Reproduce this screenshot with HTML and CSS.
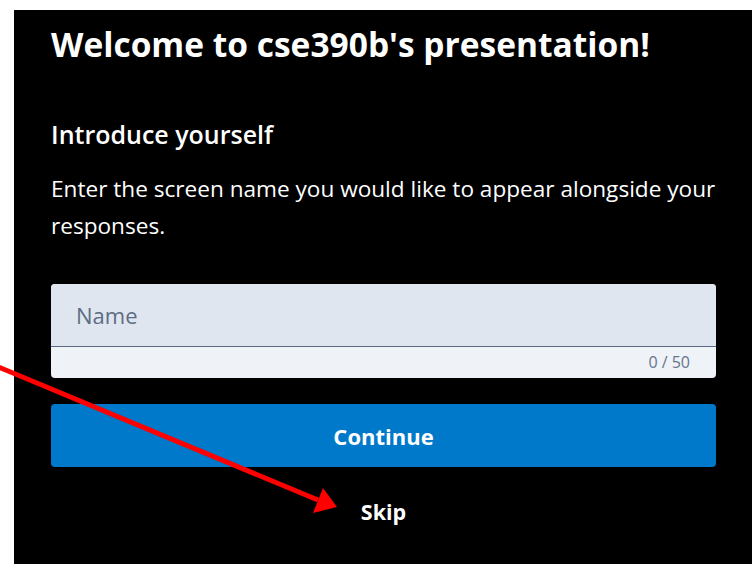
FILE: index.html
```html
<!DOCTYPE html>
<html lang="en">
<head>
<meta charset="utf-8">
<title>Welcome</title>
<link rel="stylesheet" href="styles.css">
</head>
<body>
<main class="panel">
  <h1 class="title">Welcome to cse390b's presentation!</h1>
  <h2 class="subtitle">Introduce yourself</h2>
  <p class="lead">Enter the screen name you would like to appear alongside your responses.</p>
  <div class="field">
    <input class="field-input" type="text" placeholder="Name" maxlength="50">
    <div class="field-count">0 / 50</div>
  </div>
  <button class="btn-primary" type="button">Continue</button>
  <button class="btn-link" type="button">Skip</button>
</main>
<svg class="pointer" width="360" height="530" viewBox="0 0 360 530" aria-hidden="true">
  <line x1="-4" y1="366" x2="318" y2="500" stroke="#ff0000" stroke-width="5"/>
  <polygon points="337,507 313,513 323,488" fill="#ff0000"/>
</svg>
</body>
</html>
```
FILE: styles.css
```css
html, body {
  margin: 0;
  padding: 0;
  background: #ffffff;
}

body {
  font-family: "Open Sans", "Noto Sans", sans-serif;
  color: #ffffff;
  overflow: hidden;
  height: 564px;
}

.panel {
  margin: 10px 0 0 14px;
  min-height: 554px;
  box-sizing: border-box;
  background: #000000;
  padding: 14px 36px 0 37px;
  display: flex;
  flex-direction: column;
}

.title {
  margin: 0;
  font-size: 33.5px;
  line-height: 40px;
  font-weight: 700;
}

.subtitle {
  margin: 54px 0 0;
  font-size: 25px;
  line-height: 32px;
  font-weight: 600;
}

.lead {
  margin: 20px 0 0;
  font-size: 22.6px;
  line-height: 37px;
  font-weight: 400;
}

.field {
  margin-top: 40px;
  border-radius: 4px;
  overflow: hidden;
  background: #eff3f8;
}

.field-input {
  display: block;
  width: 100%;
  box-sizing: border-box;
  height: 63px;
  border: 0;
  border-bottom: 1px solid #5b6b86;
  background: #e0e6ef;
  padding: 0 25px;
  font-family: inherit;
  font-size: 22px;
  color: #1f2a3c;
  outline: none;
}

.field-input::placeholder {
  color: #5d6c84;
}

.field-count {
  height: 31px;
  padding-right: 26px;
  text-align: right;
  font-size: 16px;
  line-height: 31px;
  color: #66748c;
}

.btn-primary {
  margin-top: 26px;
  height: 63px;
  border: 0;
  border-radius: 4px;
  background: #0079cb;
  color: #ffffff;
  font-family: inherit;
  font-size: 22px;
  font-weight: 700;
  cursor: pointer;
}

.btn-link {
  align-self: center;
  margin-top: 30px;
  border: 0;
  background: transparent;
  color: #ffffff;
  font-family: inherit;
  font-size: 21.5px;
  font-weight: 700;
  padding: 0;
  cursor: pointer;
}

.pointer {
  position: absolute;
  left: 0;
  top: 0;
  pointer-events: none;
}
```
